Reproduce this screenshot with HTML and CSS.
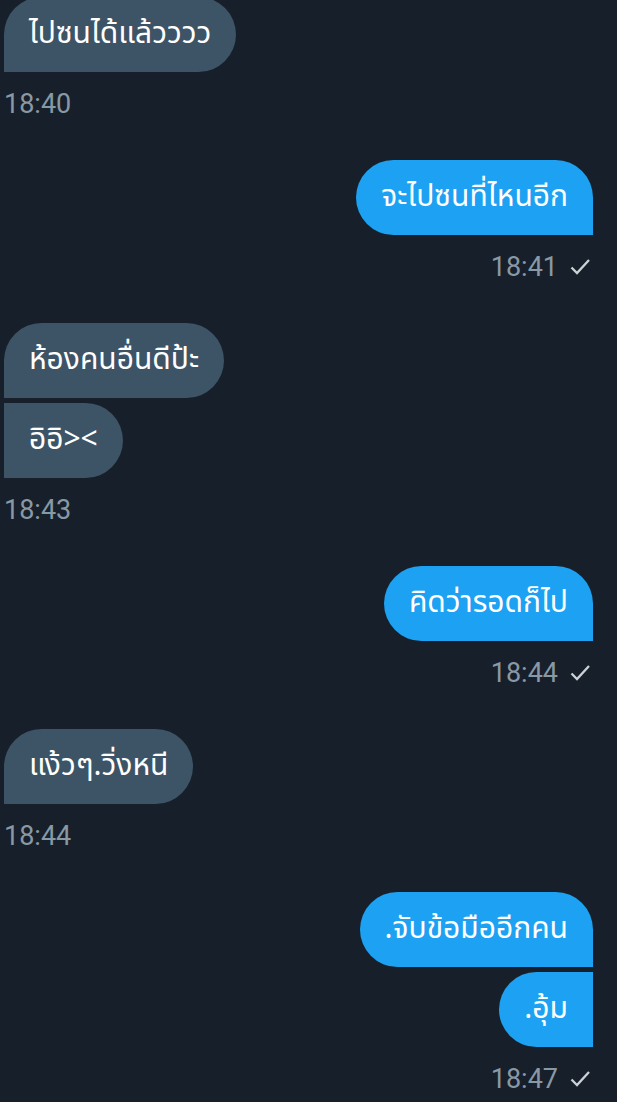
FILE: index.html
```html
<!DOCTYPE html>
<html>
<head>
    <title>Chat</title>
    <link rel="stylesheet" href="styles.css">
</head>
<body>
    <div class="chat">
        <div class="group received first">
            <div class="bubble single">ไปซนได้แล้วววว</div>
            <div class="time">18:40</div>
        </div>

        <div class="group sent">
            <div class="bubble single">จะไปซนที่ไหนอีก</div>
            <div class="time">18:41 <svg class="check" viewBox="0 0 24 24"><path d="M3.5 12.5l5.5 5.5L21 5"/></svg></div>
        </div>

        <div class="group received">
            <div class="bubble top">ห้องคนอื่นดีป้ะ</div>
            <div class="bubble bottom">อิอิ&gt;&lt;</div>
            <div class="time">18:43</div>
        </div>

        <div class="group sent">
            <div class="bubble single">คิดว่ารอดก็ไป</div>
            <div class="time">18:44 <svg class="check" viewBox="0 0 24 24"><path d="M3.5 12.5l5.5 5.5L21 5"/></svg></div>
        </div>

        <div class="group received">
            <div class="bubble single">แง้วๆ.วิ่งหนี</div>
            <div class="time">18:44</div>
        </div>

        <div class="group sent">
            <div class="bubble top">.จับข้อมืออีกคน</div>
            <div class="bubble bottom">.อุ้ม</div>
            <div class="time">18:47 <svg class="check" viewBox="0 0 24 24"><path d="M3.5 12.5l5.5 5.5L21 5"/></svg></div>
        </div>
    </div>
</body>
</html>
```

FILE: styles.css
```css
html, body {
    margin: 0;
    padding: 0;
    background: #17202a;
}
body {
    font-family: "Noto Sans Thai", "Noto Sans", sans-serif;
    color: #fff;
}
.chat {
    padding: 0 24px 0 4px;
}
.group {
    display: flex;
    flex-direction: column;
    gap: 5px;
    margin-bottom: 42px;
}
.group.first {
    margin-top: -3px;
}
.received {
    align-items: flex-start;
}
.sent {
    align-items: flex-end;
}
.bubble {
    height: 75px;
    line-height: 75px;
    padding: 0 25px;
    font-size: 30px;
    border-radius: 38px;
    box-sizing: border-box;
    white-space: nowrap;
}
.received .bubble {
    background: #3d5466;
}
.sent .bubble {
    background: #1da1f2;
}
.received .single,
.received .top {
    border-bottom-left-radius: 0;
}
.received .bottom {
    border-top-left-radius: 0;
    border-bottom-left-radius: 0;
}
.sent .single,
.sent .top {
    border-bottom-right-radius: 0;
}
.sent .bottom {
    border-top-right-radius: 0;
    border-bottom-right-radius: 0;
}
.time {
    margin-top: 13px;
    height: 28px;
    line-height: 28px;
    font-family: Roboto, "Noto Sans", sans-serif;
    font-size: 27px;
    color: #8899a6;
    display: flex;
    align-items: center;
    gap: 10px;
}
.sent .time {
    margin-right: 1px;
}
.check {
    width: 24px;
    height: 24px;
    fill: none;
    stroke: #ccd1d6;
    stroke-width: 2.3;
}
```
